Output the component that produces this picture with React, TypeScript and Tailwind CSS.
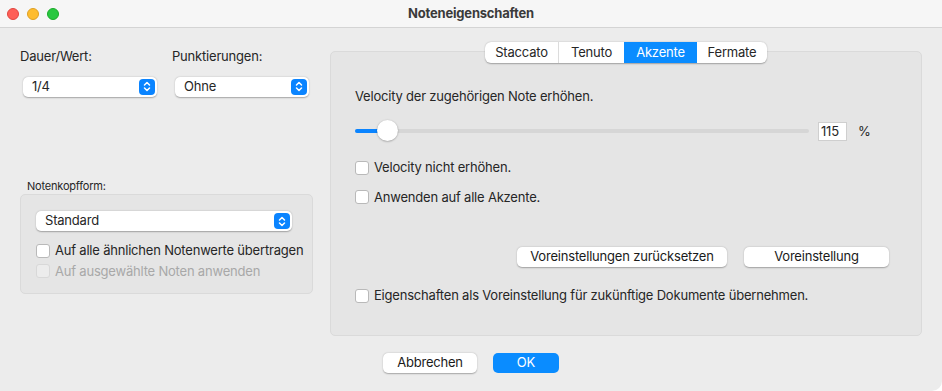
function Stepper(): JSX.Element {
  return (
    <div className="w-[16px] h-[16px] rounded-[4px] bg-[#0a84ff] flex items-center justify-center">
      <svg width="8" height="11" viewBox="0 0 8 11" fill="none" stroke="white" strokeWidth="1.5" strokeLinecap="round" strokeLinejoin="round">
        <path d="M1.5 4 L4 1.5 L6.5 4" />
        <path d="M1.5 7 L4 9.5 L6.5 7" />
      </svg>
    </div>
  );
}

function Popup({ label, width }: { label: string; width: string }): JSX.Element {
  return (
    <div className={`${width} h-[20px] bg-white rounded-[5px] shadow-[0_0.5px_1.5px_rgba(0,0,0,0.3)] flex items-center justify-between pl-[9px] pr-[2px]`}>
      <span className="text-[13px] text-[#262626]">{label}</span>
      <Stepper />
    </div>
  );
}

function Check({ label, disabled }: { label: string; disabled?: boolean }): JSX.Element {
  return (
    <div className="flex items-center gap-[5px]">
      <div
        className={`w-[14px] h-[14px] rounded-[3px] border ${
          disabled ? "border-[#d8d8d8] bg-[#ececec]" : "border-[#b9b9b9] bg-white"
        }`}
      />
      <span className={`text-[13px] ${disabled ? "text-[#a8a8a8]" : "text-[#262626]"}`}>{label}</span>
    </div>
  );
}

function Button({ label, width, primary }: { label: string; width: string; primary?: boolean }): JSX.Element {
  return (
    <div
      className={`${width} h-[20px] rounded-[5px] flex items-center justify-center text-[13px] ${
        primary ? "bg-[#0a8cff] text-white" : "bg-white text-[#1a1a1a] shadow-[0_0.5px_1.5px_rgba(0,0,0,0.3)]"
      }`}
    >
      {label}
    </div>
  );
}

export default function App(): JSX.Element {
  const tabs = ["Staccato", "Tenuto", "Akzente", "Fermate"];
  const tabWidths = ["w-[73px]", "w-[66px]", "w-[73px]", "w-[70px]"];
  return (
    <div
      className="w-[942px] h-[391px] bg-white tracking-[-0.2px]"
      style={{ fontFamily: "Inter, 'Noto Sans', sans-serif" }}
    >
      <div className="w-full h-full bg-[#ececec] rounded-br-[10px] flex flex-col overflow-hidden">
        {/* title bar */}
        <div className="h-[28px] bg-[#f6f6f6] border-b border-[#d4d4d4] flex items-center relative">
          <div className="flex gap-[8px] pl-[7px]">
            <div className="w-[12px] h-[12px] rounded-full bg-[#fe5f57] border border-[#e1463f]" />
            <div className="w-[12px] h-[12px] rounded-full bg-[#febc2e] border border-[#dfa023]" />
            <div className="w-[12px] h-[12px] rounded-full bg-[#28c840] border border-[#1aab29]" />
          </div>
          <div className="absolute inset-0 flex items-center justify-center text-[13px] font-bold text-[#3a3a3a]">
            Noteneigenschaften
          </div>
        </div>

        <div className="flex flex-1">
          {/* left column */}
          <div className="w-[330px] pl-[20px] pt-[19px] flex flex-col">
            <div className="flex">
              <div className="w-[152px] flex flex-col">
                <span className="text-[13px] text-[#262626]">Dauer/Wert:</span>
                <div className="mt-[10px] ml-[3px]">
                  <Popup label="1/4" width="w-[134px]" />
                </div>
              </div>
              <div className="flex flex-col">
                <span className="text-[13px] text-[#262626]">Punktierungen:</span>
                <div className="mt-[10px] ml-[3px]">
                  <Popup label="Ohne" width="w-[134px]" />
                </div>
              </div>
            </div>

            <span className="mt-[81px] ml-[7px] text-[11px] text-[#262626]">Notenkopfform:</span>
            <div className="mt-[0px] w-[293px] h-[100px] rounded-[5px] bg-[#e5e5e5] border border-[#dadada] pt-[16px] pl-[15px] flex flex-col">
              <Popup label="Standard" width="w-[256px]" />
              <div className="mt-[10px] flex flex-col gap-[1px]">
                <Check label="Auf alle ähnlichen Notenwerte übertragen" />
                <Check label="Auf ausgewählte Noten anwenden" disabled />
              </div>
            </div>
          </div>

          {/* right panel */}
          <div className="flex flex-col pt-[23px]">
            <div className="w-[592px] h-[285px] rounded-[5px] bg-[#e5e5e5] border border-[#dadada] flex flex-col">
              <div className="self-center -mt-[10px] flex h-[21px] bg-white rounded-[6px] shadow-[0_0.5px_1.5px_rgba(0,0,0,0.3)] overflow-hidden">
                {tabs.map((t, i) => (
                  <div
                    key={t}
                    className={`${tabWidths[i]} flex items-center justify-center text-[13px] ${
                      t === "Akzente" ? "bg-[#0a8cff] text-white" : "text-[#262626]"
                    } ${i === 1 ? "border-l border-[#dcdcdc]" : ""}`}
                  >
                    {t}
                  </div>
                ))}
              </div>

              <div className="pl-[24px] pr-[32px] flex flex-col">
                <span className="mt-[24px] text-[13px] text-[#262626]">Velocity der zugehörigen Note erhöhen.</span>

                <div className="mt-[15px] flex items-center">
                  <div className="relative w-[454px] h-[4px] rounded-full bg-[#d6d6d6]">
                    <div className="w-[32px] h-[4px] rounded-full bg-[#0a84ff]" />
                    <div className="absolute left-[22px] top-[-9px] w-[21px] h-[21px] rounded-full bg-white shadow-[0_0.5px_2px_rgba(0,0,0,0.35)]" />
                  </div>
                  <div className="ml-[9px] w-[29px] h-[19px] bg-white border border-[#cfcfcf] text-[13px] text-[#262626] pl-[2px] leading-[17px]">
                    115
                  </div>
                  <span className="ml-[11px] text-[13px] text-[#262626]">%</span>
                </div>

                <div className="mt-[17px] flex flex-col gap-[10px]">
                  <Check label="Velocity nicht erhöhen." />
                  <Check label="Anwenden auf alle Akzente." />
                </div>

                <div className="mt-[40px] flex gap-[17px] pl-[162px]">
                  <Button label="Voreinstellungen zurücksetzen" width="w-[210px]" />
                  <Button label="Voreinstellung" width="w-[145px]" />
                </div>

                <div className="mt-[19px]">
                  <Check label="Eigenschaften als Voreinstellung für zukünftige Dokumente übernehmen." />
                </div>
              </div>
            </div>
          </div>
        </div>

        <div className="h-[38px] flex justify-center gap-[16px]">
          <Button label="Abbrechen" width="w-[94px]" />
          <Button label="OK" width="w-[66px]" primary />
        </div>
      </div>
    </div>
  );
}
